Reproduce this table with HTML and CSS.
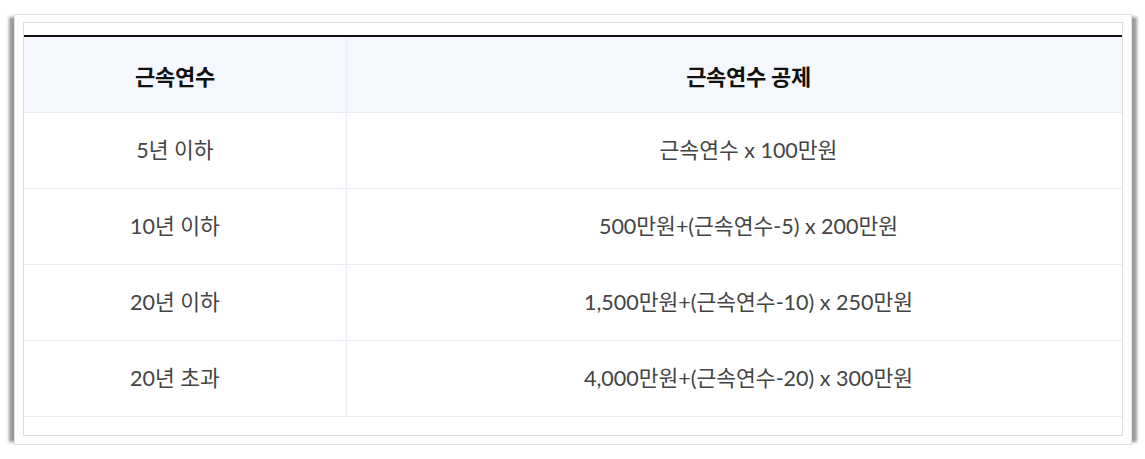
FILE: index.html
```html
<!DOCTYPE html>
<html lang="ko">
<head>
    <meta charset="UTF-8">
    <meta name="viewport" content="width=device-width, initial-scale=1.0">
    <title>근속연수 공제</title>
    <link rel="stylesheet" href="styles.css">
</head>
<body>
    <div class="frame">
        <div class="inner">
            <table class="deduct">
                <thead>
                    <tr>
                        <th class="col-years">근속연수</th>
                        <th class="col-amount">근속연수 공제</th>
                    </tr>
                </thead>
                <tbody>
                    <tr>
                        <td class="col-years">5년 이하</td>
                        <td class="col-amount">근속연수 x 100만원</td>
                    </tr>
                    <tr>
                        <td class="col-years">10년 이하</td>
                        <td class="col-amount">500만원+(근속연수-5) x 200만원</td>
                    </tr>
                    <tr>
                        <td class="col-years">20년 이하</td>
                        <td class="col-amount">1,500만원+(근속연수-10) x 250만원</td>
                    </tr>
                    <tr>
                        <td class="col-years">20년 초과</td>
                        <td class="col-amount">4,000만원+(근속연수-20) x 300만원</td>
                    </tr>
                </tbody>
            </table>
        </div>
    </div>
</body>
</html>
```

FILE: styles.css
```css
body {
    margin: 0;
    padding: 14px 14px 15px 14px;
    background: #fff;
    font-family: Lato, "Noto Sans CJK KR", sans-serif;
}
.frame {
    width: 1100px;
    background: #fff;
    border: 1px solid #e2e2e2;
    padding: 7px 8px 8px 8px;
    box-shadow: -8px 0 3px -3px #9a9a9a, 8px 0 3px -3px #9a9a9a;
}
.inner {
    border: 1px solid #dcdcdc;
    padding: 12px 0 18px 0;
}
.deduct {
    width: 100%;
    border-collapse: collapse;
    border-top: 2px solid #111;
}
.deduct th,
.deduct td {
    height: 75px;
    text-align: center;
    border-bottom: 1px solid #e9edf5;
    padding: 0;
}
.deduct th {
    background: #f4f7fc;
    color: #111;
    font-size: 22px;
    font-weight: bold;
    letter-spacing: -0.3px;
}
.deduct td {
    height: 71px;
    color: #444;
    font-size: 21.5px;
    padding-bottom: 4px;
}
.deduct .col-years {
    width: 302px;
    padding-right: 20px;
    border-right: 1px solid #e9edf5;
}
.deduct .col-amount {
    padding-left: 28px;
}
```
